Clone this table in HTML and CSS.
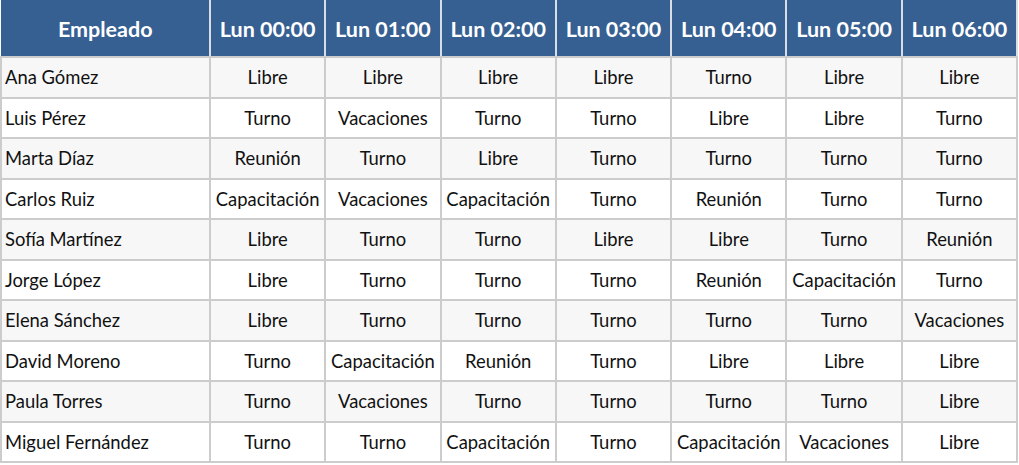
FILE: index.html
```
<!DOCTYPE html>
<html lang="es">
<head>
<meta charset="utf-8">
<title>Horario</title>
<link rel="stylesheet" href="styles.css">
</head>
<body>
<table class="schedule">
<colgroup><col class="c-name"><col><col><col><col><col><col><col></colgroup>
<thead>
<tr><th>Empleado</th><th>Lun 00:00</th><th>Lun 01:00</th><th>Lun 02:00</th><th>Lun 03:00</th><th>Lun 04:00</th><th>Lun 05:00</th><th>Lun 06:00</th></tr>
</thead>
<tbody>
<tr><td>Ana Gómez</td><td>Libre</td><td>Libre</td><td>Libre</td><td>Libre</td><td>Turno</td><td>Libre</td><td>Libre</td></tr>
<tr><td>Luis Pérez</td><td>Turno</td><td>Vacaciones</td><td>Turno</td><td>Turno</td><td>Libre</td><td>Libre</td><td>Turno</td></tr>
<tr><td>Marta Díaz</td><td>Reunión</td><td>Turno</td><td>Libre</td><td>Turno</td><td>Turno</td><td>Turno</td><td>Turno</td></tr>
<tr><td>Carlos Ruiz</td><td>Capacitación</td><td>Vacaciones</td><td>Capacitación</td><td>Turno</td><td>Reunión</td><td>Turno</td><td>Turno</td></tr>
<tr><td>Sofía Martínez</td><td>Libre</td><td>Turno</td><td>Turno</td><td>Libre</td><td>Libre</td><td>Turno</td><td>Reunión</td></tr>
<tr><td>Jorge López</td><td>Libre</td><td>Turno</td><td>Turno</td><td>Turno</td><td>Reunión</td><td>Capacitación</td><td>Turno</td></tr>
<tr><td>Elena Sánchez</td><td>Libre</td><td>Turno</td><td>Turno</td><td>Turno</td><td>Turno</td><td>Turno</td><td>Vacaciones</td></tr>
<tr><td>David Moreno</td><td>Turno</td><td>Capacitación</td><td>Reunión</td><td>Turno</td><td>Libre</td><td>Libre</td><td>Libre</td></tr>
<tr><td>Paula Torres</td><td>Turno</td><td>Vacaciones</td><td>Turno</td><td>Turno</td><td>Turno</td><td>Turno</td><td>Libre</td></tr>
<tr><td>Miguel Fernández</td><td>Turno</td><td>Turno</td><td>Capacitación</td><td>Turno</td><td>Capacitación</td><td>Vacaciones</td><td>Libre</td></tr>
</tbody>
</table>
</body>
</html>
```
FILE: styles.css
```
html, body {
  margin: 0;
  padding: 0;
  background: #ffffff;
}
body {
  font-family: Lato, "Open Sans", sans-serif;
  color: #111;
}
.schedule {
  border-collapse: collapse;
  table-layout: fixed;
  width: 1018px;
}
.c-name {
  width: 209px;
}
.schedule th {
  background: #366092;
  color: #ffffff;
  font-weight: bold;
  font-size: 21.5px;
  height: 55px;
  padding: 0;
  text-align: center;
  border: 2px solid #d9dee6;
  border-bottom-color: #cccccc;
  border-top: 1px solid #366092;
}
.schedule th:first-child {
  border-left: 1px solid #366092;
}
.schedule td {
  font-size: 18.4px;
  height: 38.5px;
  padding: 0;
  text-align: center;
  border: 2px solid #cccccc;
  white-space: nowrap;
}
.schedule td:first-child {
  text-align: left;
  padding-left: 3px;
}
.schedule tbody tr:nth-child(odd) td {
  background: #f7f7f7;
}
.schedule tbody tr:nth-child(even) td {
  background: #ffffff;
}
```
